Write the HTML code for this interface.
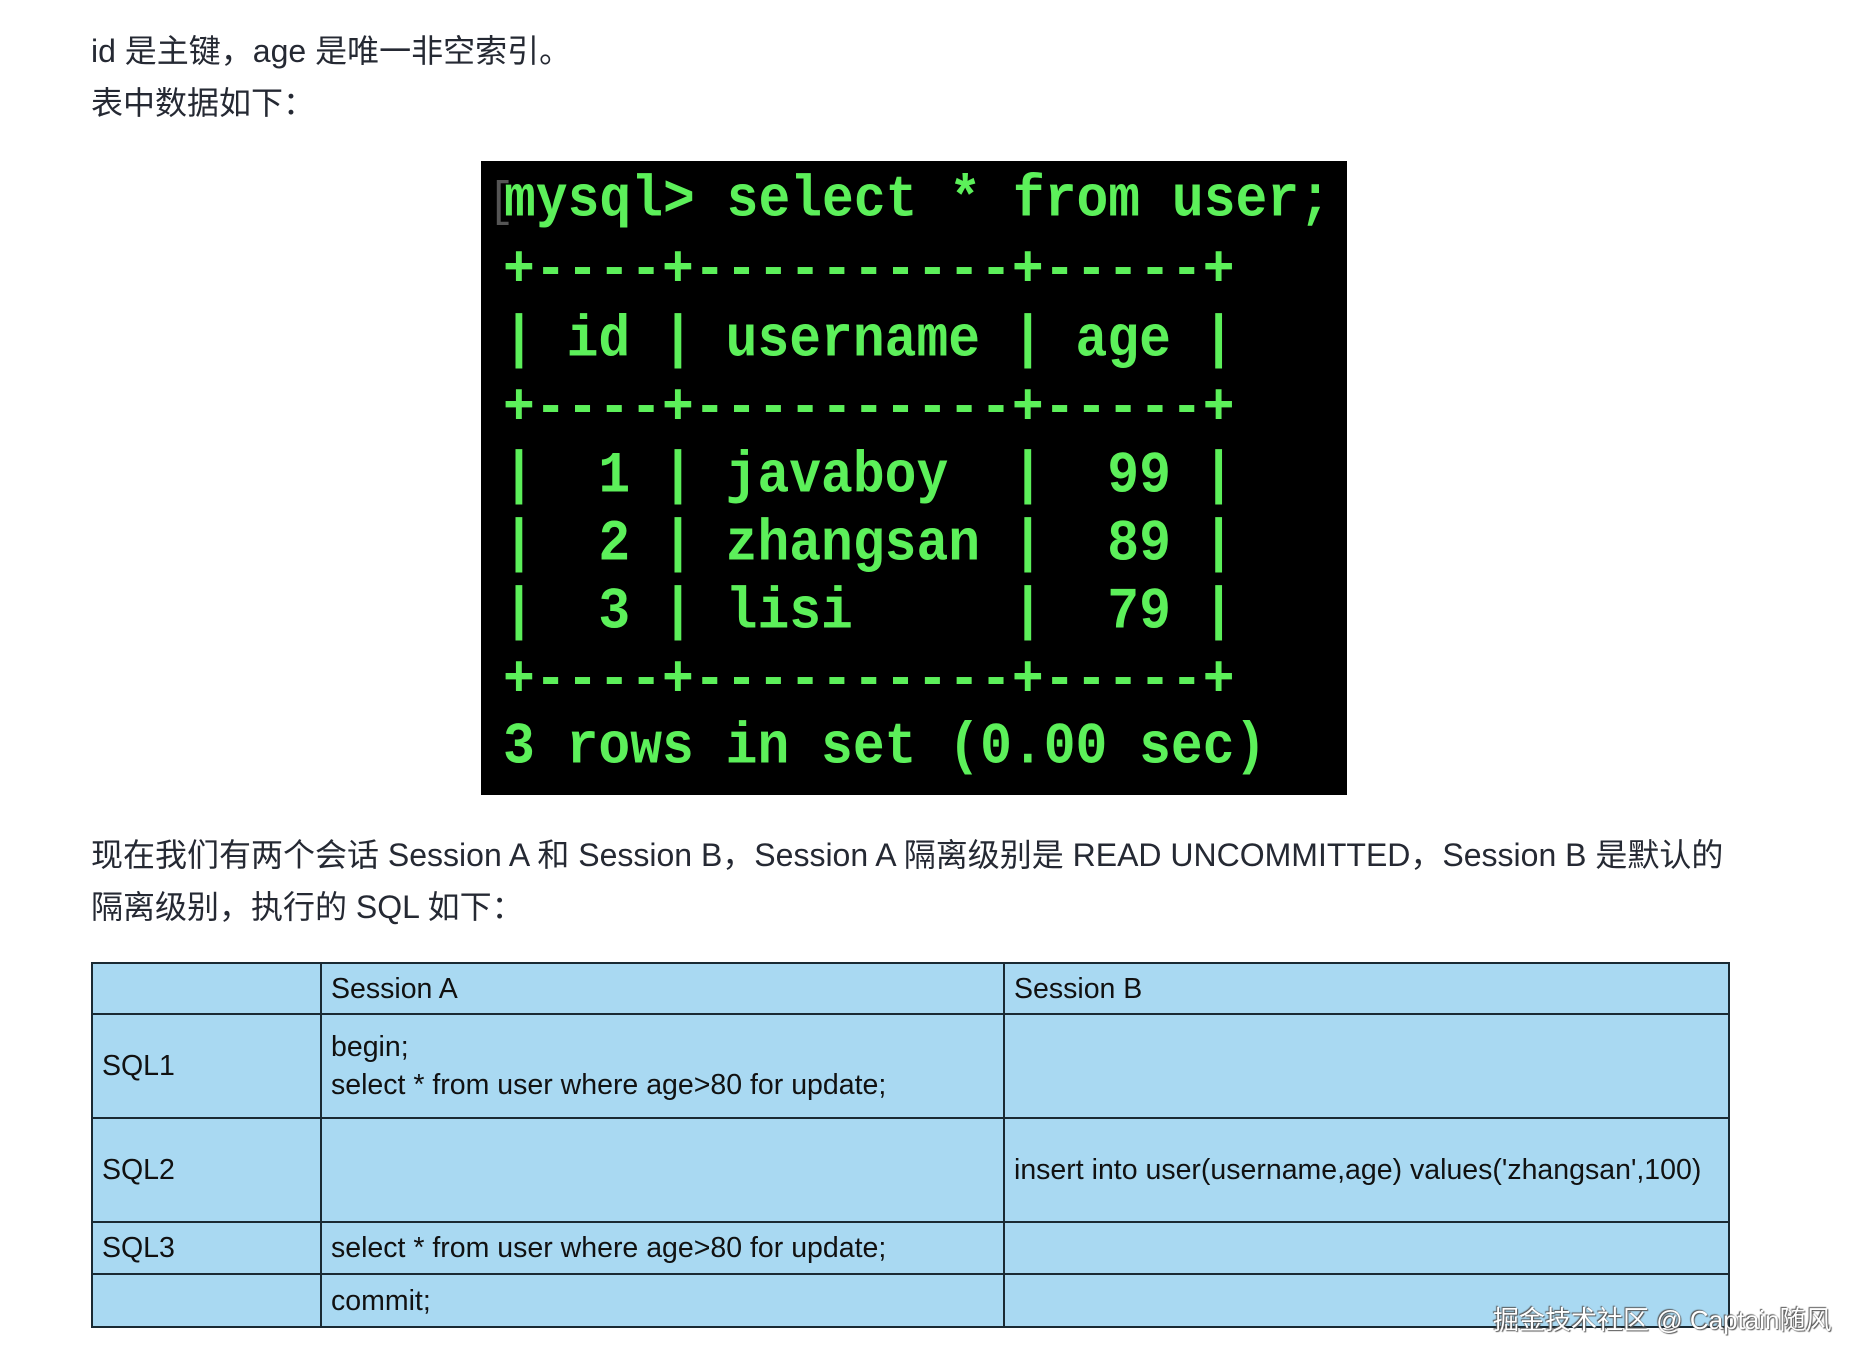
<!DOCTYPE html>
<html><head><meta charset="utf-8"><style>
body{margin:0;width:1849px;height:1361px;background:#fff;position:relative;overflow:hidden;font-family:"Liberation Sans","Noto Sans CJK SC",sans-serif;color:#252933}
.p{position:absolute;left:91px;font-size:32px;line-height:52px;white-space:nowrap}
.term{position:absolute;left:481px;top:161px;width:866px;height:634px;background:#000}
.term div{position:absolute;left:22px;font-family:"Liberation Mono","DejaVu Sans Mono",monospace;font-weight:bold;font-size:53px;color:#5cf05a;white-space:pre;line-height:68px;transform:scaleY(1.1);transform-origin:left center}
.term .br{left:7px;color:#555;font-weight:normal;font-size:44px}
table{position:absolute;left:91px;top:962px;border-collapse:collapse;background:#a9d9f2;font-family:"Liberation Sans",sans-serif;font-size:28.5px;color:#111}
td{border:2px solid #1a2a33;padding:0 9px;vertical-align:middle;line-height:38px}
.wm{position:absolute;left:1493px;top:1300px;font-size:26px;color:#fff;text-shadow:1px 1px 1px #555,-1px -1px 1px #555;white-space:nowrap}
</style></head><body>
<div class="p" style="top:25px">id 是主键，age 是唯一非空索引。</div>
<div class="p" style="top:77px">表中数据如下：</div>
<div class="term">
<div class="br" style="top:8px">[</div>
<div style="top:5px;left:23px">mysql&gt; select * from user;</div>
<div style="top:75px">+----+----------+-----+</div>
<div style="top:145px">| id | username | age |</div>
<div style="top:213px">+----+----------+-----+</div>
<div style="top:281px">|  1 | javaboy  |  99 |</div>
<div style="top:349px">|  2 | zhangsan |  89 |</div>
<div style="top:417px">|  3 | lisi     |  79 |</div>
<div style="top:485px">+----+----------+-----+</div>
<div style="top:552px">3 rows in set (0.00 sec)</div>
</div>
<div class="p" style="top:829px">现在我们有两个会话 Session A 和 Session B，Session A 隔离级别是 READ UNCOMMITTED，Session B 是默认的</div>
<div class="p" style="top:881px">隔离级别，执行的 SQL 如下：</div>
<table>
<colgroup><col style="width:229px"><col style="width:683px"><col style="width:725px"></colgroup>
<tr style="height:51px"><td></td><td>Session A</td><td>Session B</td></tr>
<tr style="height:104px"><td>SQL1</td><td>begin;<br>select * from user where age&gt;80 for update;</td><td></td></tr>
<tr style="height:104px"><td>SQL2</td><td></td><td>insert into user(username,age) values('zhangsan',100)</td></tr>
<tr style="height:52px"><td>SQL3</td><td>select * from user where age&gt;80 for update;</td><td></td></tr>
<tr style="height:53px"><td></td><td>commit;</td><td></td></tr>
</table>
<div class="wm">掘金技术社区 @ Captain随风</div>
</body></html>
